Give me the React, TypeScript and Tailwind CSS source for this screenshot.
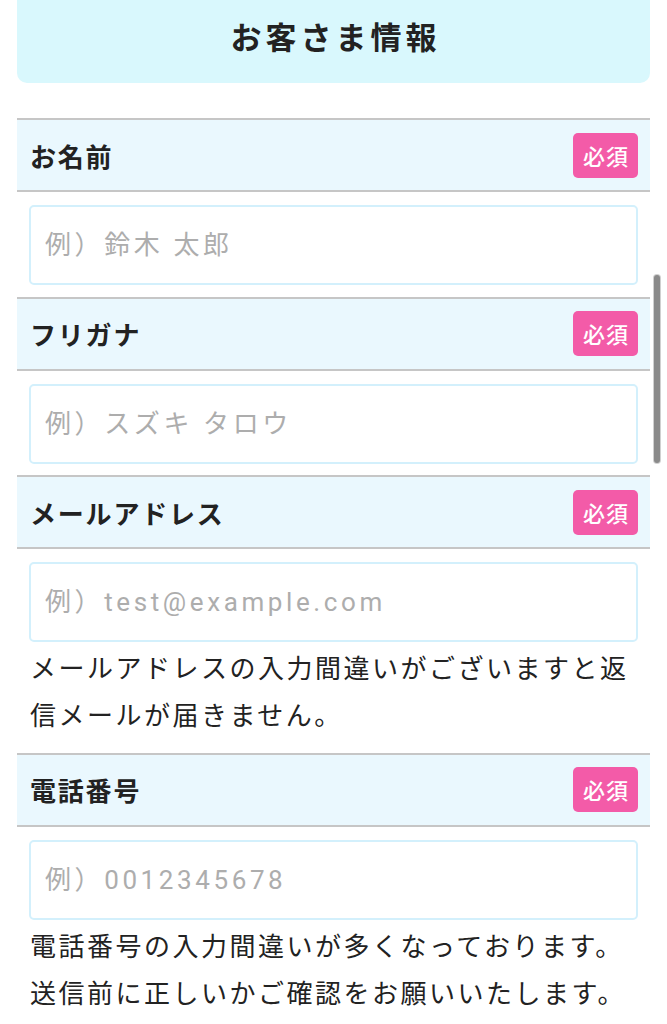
import React from 'react';

const fields = [
  { label: 'お名前', placeholder: '例）鈴木 太郎', type: 'text' },
  { label: 'フリガナ', placeholder: '例）スズキ タロウ', type: 'text' },
  {
    label: 'メールアドレス',
    placeholder: '例）test@example.com',
    type: 'email',
    note: ['メールアドレスの入力間違いがございますと返', '信メールが届きません。'],
  },
  {
    label: '電話番号',
    placeholder: '例）0012345678',
    type: 'tel',
    note: ['電話番号の入力間違いが多くなっております。', '送信前に正しいかご確認をお願いいたします。'],
  },
];

export default function App() {
  return (
    <div
      className="min-h-screen bg-white text-[#222]"
      style={{ fontFamily: '"Noto Sans CJK JP", "Noto Sans", Roboto, sans-serif' }}
    >
      <div className="mx-[17px]">
        <div className="h-[83px] rounded-b-[10px] bg-[#d9f8fd] flex items-center justify-center pb-[10px]">
          <h2 className="text-[31px] font-bold tracking-[4px] pl-[4px]">お客さま情報</h2>
        </div>

        <div className="mt-[35px]">
          {fields.map((f) => (
            <div key={f.label} className="pb-[11.5px]">
              <div className="h-[74px] border-y-2 border-[#c6c6c6] bg-[#eaf8fe] flex items-center justify-between pl-[13px] pr-[12px]">
                <span className="text-[26px] font-bold tracking-[1.8px]">{f.label}</span>
                <span className="w-[65px] h-[45px] rounded-[5px] bg-[#f35ba8] text-white text-[22px] font-medium tracking-[1px] flex items-center justify-center pl-[1px]">
                  必須
                </span>
              </div>
              <div className="px-[12px] pt-[13px]">
                <input
                  type={f.type}
                  placeholder={f.placeholder}
                  className="w-full h-[80px] rounded-[5px] border-2 border-[#d3f0fc] px-[14px] text-[26px] tracking-[3.6px] outline-none placeholder:text-[#adadad]"
                  style={{ fontFamily: 'Roboto, "Noto Sans CJK JP", sans-serif' }}
                />
              </div>
              {f.note && (
                <div className="px-[13px] pt-[1px] text-[26px] leading-[47px] tracking-[2.5px] whitespace-nowrap pb-[4px]">
                  {f.note.map((n) => (
                    <p key={n}>{n}</p>
                  ))}
                </div>
              )}
            </div>
          ))}
        </div>
      </div>

      <div className="fixed right-[7px] top-[275px] h-[188px] w-[6px] rounded-full bg-[#8a8a8a] ring-1 ring-[#d0d0d0]" />
    </div>
  );
}
